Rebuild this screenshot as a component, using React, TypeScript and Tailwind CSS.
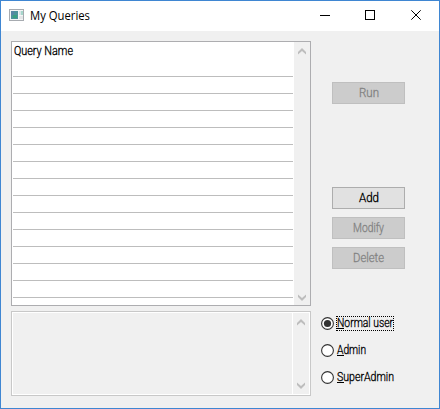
import React from "react";

function Chevron({ up = false }: { up?: boolean }) {
  return (
    <svg width="8" height="7" viewBox="0 0 8 7" className={up ? "" : "rotate-180"}>
      <path d="M0 4 L4 0 L8 4 V6.5 L4 2.9 L0 6.5 Z" fill="#bdbdbd" />
    </svg>
  );
}

function Scrollbar({ className }: { className: string }) {
  return (
    <div className={`flex flex-col items-center justify-between bg-[#f0f0f0] ${className}`}>
      <Chevron up />
      <Chevron />
    </div>
  );
}

function Button({ label, width, disabled = false }: { label: string; width: number; disabled?: boolean }) {
  return (
    <button
      disabled={disabled}
      className={`flex h-[22px] w-[73px] items-center justify-center border ${
        disabled ? "border-[#bfbfbf] bg-[#cccccc] text-[#838383]" : "border-[#adadad] bg-[#e1e1e1] text-black"
      }`}
    >
      <Label text={label} width={width} />
    </button>
  );
}

function Label({
  text,
  width,
  accessKey = false,
  weight = 0.3,
}: {
  text: string;
  width: number;
  accessKey?: boolean;
  weight?: number;
}) {
  return (
    <svg width={width} height="15" className="block overflow-visible" fill="currentColor">
      <text x="0" y="11" textLength={width} lengthAdjust="spacingAndGlyphs" stroke="currentColor" strokeWidth={weight}>
        {text}
      </text>
      {accessKey && <rect x="0" y="12" width="7" height="1" />}
    </svg>
  );
}

function Radio({ label, width, checked = false }: { label: string; width: number; checked?: boolean }) {
  return (
    <label className="flex h-[15px] items-center">
      <svg width="13" height="13" viewBox="0 0 13 13" className="mr-[2px]">
        <circle cx="6.5" cy="6.5" r="5.9" fill="white" stroke="#333" strokeWidth="1.1" />
        {checked && <circle cx="6.5" cy="6.5" r="3.6" fill="#333" />}
      </svg>
      <span className={`flex h-[15px] items-center border border-dotted ${checked ? "border-black" : "border-transparent"}`}>
        <Label text={label} width={width} accessKey />
      </span>
    </label>
  );
}

export default function App() {
  return (
    <div className="flex h-[409px] w-[440px] flex-col border border-[#3f86d2] bg-[#f0f0f0] font-['Roboto',sans-serif] text-[12px] leading-[15px] font-light text-black">
      <header className="flex h-[30px] shrink-0 items-center bg-white pl-2">
        <svg width="15" height="12" viewBox="0 0 15 12" className="mb-[2px] mr-[6px]" shapeRendering="crispEdges">
          <rect width="15" height="12" fill="#a7abb0" />
          <rect x="1" y="1" width="13" height="10" fill="#f4f5f6" />
          <rect x="2" y="2" width="7" height="8" fill="#4d929c" />
          <rect x="2" y="2" width="3" height="4" fill="#5886a5" />
          <rect x="4" y="6" width="4" height="3" fill="#38a080" />
          <rect x="10" y="2" width="2" height="4" fill="#d9e4e8" />
          <rect x="12" y="2" width="2" height="4" fill="#a6d6cb" />
          <rect x="10" y="7" width="4" height="3" fill="#e4e6e8" />
        </svg>
        <div className="font-['Open_Sans',sans-serif] font-normal">
          <Label text="My Queries" width={60} weight={0} />
        </div>
        <svg width="103" height="11" viewBox="0 0 103 11" fill="none" stroke="black" className="mb-px ml-auto mr-4">
          <path d="M0 5.5 H10" shapeRendering="crispEdges" />
          <rect x="45.5" y="0.5" width="9" height="9" shapeRendering="crispEdges" />
          <path d="M91.3 0.3 L100.7 9.7 M100.7 0.3 L91.3 9.7" />
        </svg>
      </header>
      <main className="flex flex-1 pl-[10px] pt-[10px]">
        <div className="flex w-[300px] flex-col gap-[5px]">
          <div className="flex h-[265px] border border-[#adadb0] bg-white">
            <div className="flex flex-1 flex-col pl-px pr-px">
              <div className="h-[35px] border-b border-[#bdbdbd] pl-px pt-[2px]">
                <Label text="Query Name" width={59} />
              </div>
              {Array.from({ length: 13 }, (_, i) => (
                <div key={i} className="h-[17px] border-b border-[#bdbdbd]" />
              ))}
            </div>
            <Scrollbar className="w-4 pt-[6px] pb-1" />
          </div>
          <div className="flex h-[85px] border border-[#c8c8c8]">
            <div className="flex flex-1 border border-white">
              <div className="flex-1 border-r border-white" />
              <Scrollbar className="w-4 pt-[6px] pb-[5px]" />
            </div>
          </div>
        </div>
        <div className="flex flex-col pl-[10px]">
          <div className="flex flex-col pl-[11px] pt-[41px]">
            <Button label="Run" width={20} disabled />
            <div className="mt-[83px] flex flex-col gap-2">
              <Button label="Add" width={20} />
              <Button label="Modify" width={31} disabled />
              <Button label="Delete" width={31} disabled />
            </div>
          </div>
          <div className="mt-[47px] flex flex-col gap-3">
            <Radio label="Normal user" width={56} checked />
            <Radio label="Admin" width={29} />
            <Radio label="SuperAdmin" width={57} />
          </div>
        </div>
      </main>
    </div>
  );
}
